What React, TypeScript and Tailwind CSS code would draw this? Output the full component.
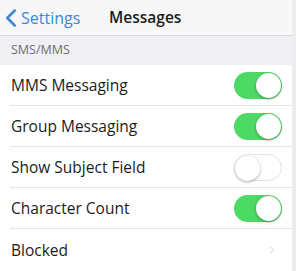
import { ChevronLeft, ChevronRight } from "lucide-react";

const rows = [
  { label: "MMS Messaging", on: true },
  { label: "Group Messaging", on: true },
  { label: "Show Subject Field", on: false },
  { label: "Character Count", on: true },
];

function Toggle({ on }: { on: boolean }) {
  return (
    <div
      className={`relative w-[48px] h-[27px] rounded-full ${
        on ? "bg-[#4cd964]" : "bg-white border border-[#e3e3e3]"
      }`}
    >
      <div
        className={`absolute top-[1px] w-[25px] h-[25px] rounded-full bg-white shadow-[0_1px_3px_rgba(0,0,0,0.35)] ${
          on ? "right-[1px]" : "left-[0px] top-[0px]"
        }`}
      />
    </div>
  );
}

export default function App() {
  return (
    <div className="w-[296px] h-[271px] overflow-hidden bg-white border-r-4 border-[#ececec] font-['Open_Sans',sans-serif] text-[#1c1c1c]">
      {/* nav bar */}
      <div className="h-[36px] bg-[#f7f7f7] border-b border-[#d8d8d8] flex items-center">
        <div className="flex items-center text-[#3b86dc] w-[109px]">
          <ChevronLeft size={30} strokeWidth={2} className="-ml-[4px]" />
          <span className="text-[16px] -ml-[5px]">Settings</span>
        </div>
        <span className="text-[15.5px] font-semibold">Messages</span>
      </div>

      {/* section header */}
      <div className="h-[29px] bg-[#efeff4] flex items-center pl-[11px] text-[12.5px] text-[#6d6d72]">
        SMS/MMS
      </div>

      {/* rows */}
      <div className="pl-[10px]">
        {rows.map(r => (
          <div
            key={r.label}
            className="h-[41px] flex items-center justify-between pr-[10px] border-b border-[#e6e6e6]"
          >
            <span className="text-[15.5px] pl-[1px] pt-[2px]">{r.label}</span>
            <Toggle on={r.on} />
          </div>
        ))}
        <div className="h-[41px] flex items-center justify-between pr-[14px]">
          <span className="text-[15.5px] pl-[1px] pt-[2px]">Blocked</span>
          <ChevronRight size={12} className="text-[#d0d0d0]" />
        </div>
      </div>
    </div>
  );
}
